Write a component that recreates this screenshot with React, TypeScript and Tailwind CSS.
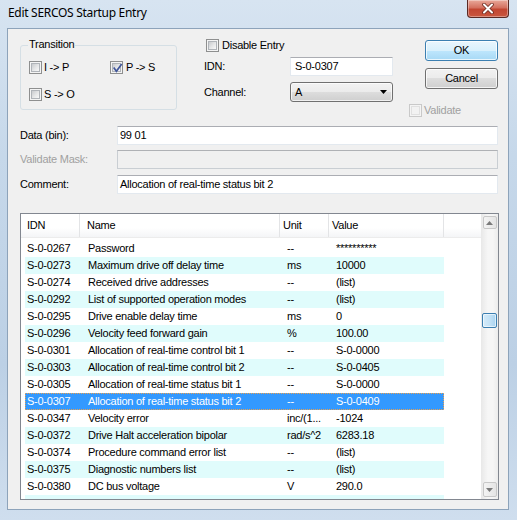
import React from "react";

const rows: string[][] = [
  ["S-0-0267", "Password", "--", "**********"],
  ["S-0-0273", "Maximum drive off delay time", "ms", "10000"],
  ["S-0-0274", "Received drive addresses", "--", "(list)"],
  ["S-0-0292", "List of supported operation modes", "--", "(list)"],
  ["S-0-0295", "Drive enable delay time", "ms", "0"],
  ["S-0-0296", "Velocity feed forward gain", "%", "100.00"],
  ["S-0-0301", "Allocation of real-time control bit 1", "--", "S-0-0000"],
  ["S-0-0303", "Allocation of real-time control bit 2", "--", "S-0-0405"],
  ["S-0-0305", "Allocation of real-time status bit 1", "--", "S-0-0000"],
  ["S-0-0307", "Allocation of real-time status bit 2", "--", "S-0-0409"],
  ["S-0-0347", "Velocity error", "inc/(1...", "-1024"],
  ["S-0-0372", "Drive Halt acceleration bipolar", "rad/s^2", "6283.18"],
  ["S-0-0374", "Procedure command error list", "--", "(list)"],
  ["S-0-0375", "Diagnostic numbers list", "--", "(list)"],
  ["S-0-0380", "DC bus voltage", "V", "290.0"],
  ["S-0-0381", "DC bus current", "A", "0.000"],
];

function Check({ checked = false, disabled = false }: { checked?: boolean; disabled?: boolean }) {
  return (
    <span
      className={`relative shrink-0 w-[13px] h-[13px] border flex items-center justify-center ${
        disabled ? "border-[#c9c9c9] bg-[#f4f4f4]" : "border-[#8e8f8f] bg-[#f4f4f4]"
      }`}
    >
      <span
        className={`w-[9px] h-[9px] border ${
          disabled
            ? "border-[#e0e0e0] bg-[#f2f2f2]"
            : "border-[#b0b4b9] bg-[linear-gradient(135deg,#c9cbce_0%,#e6e7e8_55%,#f8f8f8_100%)]"
        }`}
      />
      {checked && (
        <svg className="absolute left-[1px] top-[1px]" width="11" height="11" viewBox="0 0 11 11">
          <path d="M2.2 5.2 L4.4 8.2 L9.2 1.6" stroke="#41569a" strokeWidth="1.7" fill="none" strokeLinecap="square" />
        </svg>
      )}
    </span>
  );
}

function Btn({ children, def = false }: { children: React.ReactNode; def?: boolean }) {
  return (
    <div
      className={`ml-[16px] w-[73px] h-[21px] rounded-[3px] border flex items-center justify-center shadow-[inset_0_0_0_1px_rgba(255,255,255,0.75)] ${
        def
          ? "border-[#3c7fb1] bg-[linear-gradient(#eaf6fd_0%,#d9f0fc_50%,#bee6fd_50%,#a7d9f5_100%)]"
          : "border-[#707070] bg-[linear-gradient(#f2f2f2_0%,#ebebeb_50%,#dddddd_50%,#cfcfcf_100%)]"
      }`}
    >
      <span className="leading-none">{children}</span>
    </div>
  );
}

export default function App() {
  return (
    <div className="w-[517px] h-[520px] overflow-hidden flex flex-col bg-[linear-gradient(180deg,#d7e4f1_0%,#c6d8ea_30%,#bcd0e5_70%,#cfdeee_100%)] font-['Liberation_Sans',Arial,sans-serif] text-[11px] tracking-[-0.25px] text-black">
      {/* Title bar */}
      <div className="h-[29px] shrink-0 flex items-start">
        <div className="pl-[8px] pt-[5px] text-[12px] leading-[16px] tracking-[-0.3px] font-['Noto_Sans',sans-serif] text-black">
          Edit SERCOS Startup Entry
        </div>
        <div className="ml-auto mr-[8px] w-[42px] h-[18px] rounded-b-[4px] border border-t-0 border-[#5a2a24] bg-[linear-gradient(#e9a99b_0%,#d47160_45%,#c24632_55%,#c9573f_100%)] shadow-[inset_0_0_0_1px_rgba(255,255,255,0.35)] flex items-center justify-center">
          <svg width="14" height="11" viewBox="0 0 14 11">
            <path d="M3 1.5 L11 9.5 M11 1.5 L3 9.5" stroke="#6b2a20" strokeWidth="3.6" strokeLinecap="round" />
            <path d="M3 1.5 L11 9.5 M11 1.5 L3 9.5" stroke="#ffffff" strokeWidth="2" strokeLinecap="round" />
          </svg>
        </div>
      </div>

      {/* Client */}
      <div className="ml-[8px] w-[500px] h-[480px] shrink-0 bg-[#f0f0f0] shadow-[0_0_0_1px_#8da3ba] flex flex-col">
        {/* Top section */}
        <div className="h-[97px] shrink-0 flex items-start">
          {/* Transition group */}
          <div className="relative ml-[12px] mt-[16px] w-[157px] h-[65px] border border-[#d5dfe5] rounded-[3px]">
            <span className="absolute -top-[8px] left-[7px] px-[1px] bg-[#f0f0f0] leading-[13px]">Transition</span>
            <div className="pl-[8px] pt-[15px] flex flex-col gap-[14px]">
              <div className="flex items-center">
                <div className="w-[81px] flex items-center gap-[2px]">
                  <Check />
                  <span className="leading-[13px]">I -&gt; P</span>
                </div>
                <div className="flex items-center gap-[3px]">
                  <Check checked />
                  <span className="leading-[13px]">P -&gt; S</span>
                </div>
              </div>
              <div className="flex items-center gap-[2px]">
                <Check />
                <span className="leading-[13px]">S -&gt; O</span>
              </div>
            </div>
          </div>

          {/* Middle column */}
          <div className="ml-[27px] mt-[10px] w-[189px] flex flex-col">
            <div className="pl-[2px] h-[13px] flex items-center gap-[3px]">
              <Check />
              <span className="leading-[13px]">Disable Entry</span>
            </div>
            <div className="mt-[5px] h-[19px] flex items-center">
              <span className="w-[86px]">IDN:</span>
              <div className="w-[103px] h-[19px] bg-white border border-[#e3e9ef] border-t-[#abadb3] pl-[4px] flex items-center">
                S-0-0307
              </div>
            </div>
            <div className="mt-[6px] h-[20px] flex items-center">
              <span className="w-[86px]">Channel:</span>
              <div className="w-[103px] h-[20px] rounded-[3px] border border-[#707070] bg-[linear-gradient(#f2f2f2_0%,#ebebeb_50%,#dddddd_50%,#cfcfcf_100%)] shadow-[inset_0_0_0_1px_rgba(255,255,255,0.7)] pl-[4px] pr-[5px] flex items-center">
                <span>A</span>
                <svg className="ml-auto" width="7" height="4" viewBox="0 0 7 4">
                  <path d="M0 0 H7 L3.5 4 Z" fill="#000" />
                </svg>
              </div>
            </div>
          </div>

          {/* Right column */}
          <div className="ml-[16px] mt-[11px] flex flex-col">
            <Btn def>OK</Btn>
            <div className="mt-[7px]">
              <Btn>Cancel</Btn>
            </div>
            <div className="mt-[15px] flex items-center gap-[2px]">
              <Check disabled />
              <span className="leading-[13px] text-[#a0a0a0]">Validate</span>
            </div>
          </div>
        </div>

        {/* Data fields */}
        <div className="ml-[12px] flex flex-col">
          <div className="h-[19px] flex items-center">
            <span className="w-[97px]">Data (bin):</span>
            <div className="w-[381px] h-[19px] bg-white border border-[#e3e9ef] border-t-[#abadb3] pl-[2px] flex items-center">99 01</div>
          </div>
          <div className="mt-[5px] h-[19px] flex items-center">
            <span className="w-[97px] text-[#a0a0a0]">Validate Mask:</span>
            <div className="w-[381px] h-[19px] bg-[#f0f0f0] border border-[#c9ced3] border-t-[#afb1b5]" />
          </div>
          <div className="mt-[6px] h-[19px] flex items-center">
            <span className="w-[97px]">Comment:</span>
            <div className="w-[381px] h-[19px] bg-white border border-[#e3e9ef] border-t-[#abadb3] pl-[2px] flex items-center">
              Allocation of real-time status bit 2
            </div>
          </div>
        </div>

        {/* List view */}
        <div className="ml-[12px] mt-[19px] w-[479px] h-[287px] border border-[#828790] bg-white flex overflow-hidden">
          <div className="w-[460px] h-full flex flex-col overflow-hidden">
            <div className="h-[24px] shrink-0 flex bg-[linear-gradient(#ffffff_0%,#ffffff_60%,#f4f5f7_100%)] border-b border-[#ececec]">
              <div className="w-[59px] pl-[6px] border-r border-[#e3e4e6] flex items-center">IDN</div>
              <div className="w-[200px] pl-[7px] border-r border-[#e3e4e6] flex items-center">Name</div>
              <div className="w-[49px] pl-[3px] border-r border-[#e3e4e6] flex items-center">Unit</div>
              <div className="w-[115px] pl-[3px] border-r border-[#e3e4e6] flex items-center">Value</div>
              <div className="flex-1" />
            </div>
            <div className="mt-[2px] flex flex-col">
              {rows.map((r, i) => {
                const sel = r[0] === "S-0-0307";
                const alt = i % 2 === 1;
                return (
                  <div
                    key={r[0]}
                    className={`ml-[4px] w-[419px] h-[17px] shrink-0 grid grid-cols-[61px_199px_49px_110px] leading-[17px] whitespace-nowrap ${
                      sel
                        ? "bg-[#3399ff] text-white outline outline-1 outline-dotted outline-offset-[-1px] outline-[#e8a050]"
                        : alt
                        ? "bg-[#e0fcfc]"
                        : "bg-white"
                    }`}
                  >
                    <span className="pl-[2px]">{r[0]}</span>
                    <span className="pl-[2px]">{r[1]}</span>
                    <span className="pl-[2px]">{r[2]}</span>
                    <span className="pl-[2px]">{r[3]}</span>
                  </div>
                );
              })}
            </div>
          </div>
          {/* Scrollbar */}
          <div className="w-[17px] h-full flex flex-col items-center bg-[linear-gradient(90deg,#e8e8e8_0%,#f6f6f6_40%,#f6f6f6_70%,#ececec_100%)]">
            <div className="mt-[2px] w-[14px] h-[13px] rounded-[2px] border border-[#c8c8c8] bg-[linear-gradient(90deg,#f4f4f4,#e4e4e4)] flex items-center justify-center">
              <svg width="7" height="4" viewBox="0 0 7 4">
                <path d="M0 4 H7 L3.5 0 Z" fill="#7a7a7a" />
              </svg>
            </div>
            <div className="mt-[84px] w-[15px] h-[15px] rounded-[2px] border border-[#3c7fb1] bg-[linear-gradient(90deg,#d5ebf9_0%,#c4e2f6_50%,#a9d3f0_100%)] shadow-[inset_0_0_0_1px_rgba(255,255,255,0.6)]" />
            <div className="mt-auto mb-[2px] w-[14px] h-[15px] rounded-[2px] border border-[#c8c8c8] bg-[linear-gradient(90deg,#f4f4f4,#e4e4e4)] flex items-center justify-center">
              <svg width="7" height="4" viewBox="0 0 7 4">
                <path d="M0 0 H7 L3.5 4 Z" fill="#7a7a7a" />
              </svg>
            </div>
          </div>
        </div>
      </div>
    </div>
  );
}
